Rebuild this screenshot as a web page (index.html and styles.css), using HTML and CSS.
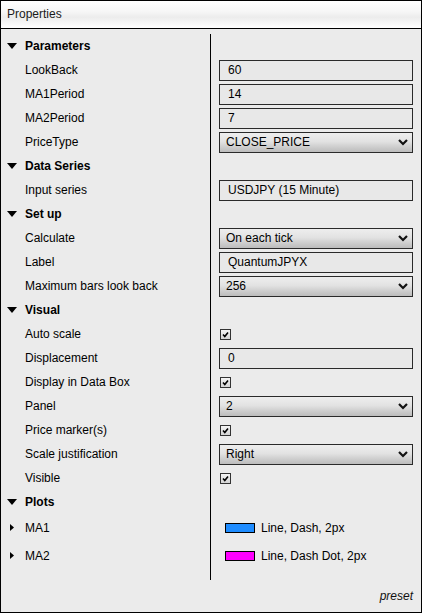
FILE: index.html
```html
<!DOCTYPE html>
<html lang="en">
<head>
    <meta charset="UTF-8">
    <meta name="viewport" content="width=device-width, initial-scale=1.0">
    <title>Properties</title>
    <link rel="stylesheet" href="styles.css">
</head>
<body>
    <div class="window">
        <div class="titlebar">Properties</div>

        <div class="props">
            <div class="names">
                <div class="row group"><svg class="caret" width="10" height="6" viewBox="0 0 10 6"><polygon points="0,0 10,0 5,6"/></svg>Parameters</div>
                <div class="row">LookBack</div>
                <div class="row">MA1Period</div>
                <div class="row">MA2Period</div>
                <div class="row">PriceType</div>

                <div class="row group"><svg class="caret" width="10" height="6" viewBox="0 0 10 6"><polygon points="0,0 10,0 5,6"/></svg>Data Series</div>
                <div class="row">Input series</div>

                <div class="row group"><svg class="caret" width="10" height="6" viewBox="0 0 10 6"><polygon points="0,0 10,0 5,6"/></svg>Set up</div>
                <div class="row">Calculate</div>
                <div class="row">Label</div>
                <div class="row">Maximum bars look back</div>

                <div class="row group"><svg class="caret" width="10" height="6" viewBox="0 0 10 6"><polygon points="0,0 10,0 5,6"/></svg>Visual</div>
                <div class="row">Auto scale</div>
                <div class="row">Displacement</div>
                <div class="row">Display in Data Box</div>
                <div class="row">Panel</div>
                <div class="row">Price marker(s)</div>
                <div class="row">Scale justification</div>
                <div class="row">Visible</div>

                <div class="row group"><svg class="caret" width="10" height="6" viewBox="0 0 10 6"><polygon points="0,0 10,0 5,6"/></svg>Plots</div>
                <div class="row plot"><svg class="caret-right" width="4" height="7" viewBox="0 0 4 7"><polygon points="0,0 4,3.5 0,7"/></svg>MA1</div>
                <div class="row plot"><svg class="caret-right" width="4" height="7" viewBox="0 0 4 7"><polygon points="0,0 4,3.5 0,7"/></svg>MA2</div>
            </div>

            <div class="values">
                <div class="row"></div>
                <div class="row"><span class="field">60</span></div>
                <div class="row"><span class="field">14</span></div>
                <div class="row"><span class="field">7</span></div>
                <div class="row"><span class="field select">CLOSE_PRICE<svg class="chevron" width="10" height="7" viewBox="0 0 10 7"><polyline points="1,1 5,5 9,1"/></svg></span></div>

                <div class="row"></div>
                <div class="row"><span class="field">USDJPY (15 Minute)</span></div>

                <div class="row"></div>
                <div class="row"><span class="field select">On each tick<svg class="chevron" width="10" height="7" viewBox="0 0 10 7"><polyline points="1,1 5,5 9,1"/></svg></span></div>
                <div class="row"><span class="field">QuantumJPYX</span></div>
                <div class="row"><span class="field select">256<svg class="chevron" width="10" height="7" viewBox="0 0 10 7"><polyline points="1,1 5,5 9,1"/></svg></span></div>

                <div class="row"></div>
                <div class="row"><span class="check"><svg width="9" height="9" viewBox="0 0 9 9"><polyline points="2,4.5 3.8,6.5 7,2.5"/></svg></span></div>
                <div class="row"><span class="field">0</span></div>
                <div class="row"><span class="check"><svg width="9" height="9" viewBox="0 0 9 9"><polyline points="2,4.5 3.8,6.5 7,2.5"/></svg></span></div>
                <div class="row"><span class="field select">2<svg class="chevron" width="10" height="7" viewBox="0 0 10 7"><polyline points="1,1 5,5 9,1"/></svg></span></div>
                <div class="row"><span class="check"><svg width="9" height="9" viewBox="0 0 9 9"><polyline points="2,4.5 3.8,6.5 7,2.5"/></svg></span></div>
                <div class="row"><span class="field select">Right<svg class="chevron" width="10" height="7" viewBox="0 0 10 7"><polyline points="1,1 5,5 9,1"/></svg></span></div>
                <div class="row"><span class="check"><svg width="9" height="9" viewBox="0 0 9 9"><polyline points="2,4.5 3.8,6.5 7,2.5"/></svg></span></div>

                <div class="row"></div>
                <div class="row plot"><span class="swatch blue"></span>Line, Dash, 2px</div>
                <div class="row plot"><span class="swatch magenta"></span>Line, Dash Dot, 2px</div>
            </div>
        </div>

        <div class="footer">preset</div>
    </div>
</body>
</html>
```

FILE: styles.css
```css
html, body {
    margin: 0;
    padding: 0;
}

body {
    font-family: "Liberation Sans", Arial, sans-serif;
    font-size: 12px;
    color: #000;
    background: #ebebeb;
}

.window {
    width: 422px;
    height: 613px;
    box-sizing: border-box;
    border: 1px solid #000;
    background: #ebebeb;
    display: flex;
    flex-direction: column;
}

.titlebar {
    height: 27px;
    line-height: 27px;
    padding-left: 6px;
    color: #1a1a1a;
    border-bottom: 1px solid #000;
    background: linear-gradient(to bottom, #ffffff 0%, #f6f6f6 40%, #ececec 60%, #f8f8f8 85%, #ffffff 100%);
}

.props {
    display: flex;
    margin-top: 5px;
}

.names {
    width: 209px;
    border-right: 1px solid #000;
    padding-bottom: 10px;
}

.values {
    flex: 1;
    padding-left: 8px;
    padding-right: 8px;
}

.row {
    height: 24px;
    display: flex;
    align-items: center;
}

.row.plot {
    height: 28px;
}

.names .row {
    padding-left: 24px;
    position: relative;
}

.group {
    font-weight: bold;
}

.caret {
    position: absolute;
    left: 6px;
    top: 9px;
}

.caret-right {
    position: absolute;
    left: 9px;
    top: 10px;
}

.field {
    flex: 1;
    height: 21px;
    box-sizing: border-box;
    border: 1px solid #2a2a2a;
    background: #e8e8e8;
    padding-left: 8px;
    display: flex;
    align-items: center;
}

.field.select {
    padding-left: 6px;
    justify-content: space-between;
    background: linear-gradient(to bottom, #eeeeee 0%, #e2e2e2 45%, #c9c9c9 80%, #bcbcbc 100%);
}

.chevron {
    margin-right: 4px;
}

.chevron polyline {
    fill: none;
    stroke: #111;
    stroke-width: 2.2;
}

.check {
    width: 11px;
    height: 11px;
    box-sizing: border-box;
    border: 1px solid #333;
    background: linear-gradient(to bottom, #f4f4f4, #d4d4d4);
    margin-left: 1px;
    display: flex;
    align-items: center;
    justify-content: center;
}

.check svg {
    display: block;
}

.check polyline {
    fill: none;
    stroke: #000;
    stroke-width: 1.6;
}

.swatch {
    width: 30px;
    height: 10px;
    box-sizing: border-box;
    border: 1px solid #000;
    margin-left: 6px;
    margin-right: 6px;
}

.swatch.blue {
    background: #1e8cff;
}

.swatch.magenta {
    background: #ff00ff;
}

.footer {
    margin-top: auto;
    text-align: right;
    font-style: italic;
    padding: 0 8px 9px 0;
    color: #111;
}
```
